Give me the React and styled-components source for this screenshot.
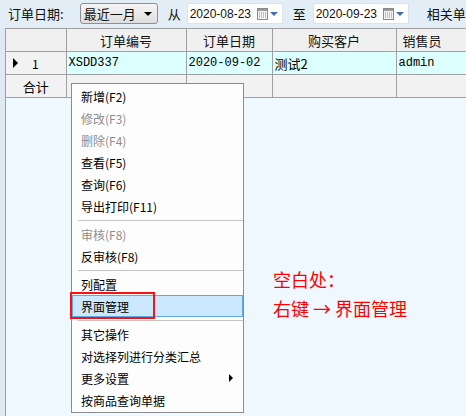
import React from "react";
import styled, { createGlobalStyle } from "styled-components";

const GlobalStyle = createGlobalStyle`
  html, body {
    margin: 0;
    padding: 0;
    background: #e3edf5;
  }
  body {
    font-family: "Noto Sans CJK SC", "Liberation Sans", sans-serif;
  }
`;

const Page = styled.div`
  position: relative;
  width: 466px;
  height: 416px;
  overflow: hidden;
  background: #e3edf5;
  display: flex;
  flex-direction: column;
`;

const Toolbar = styled.div`
  height: 28px;
  flex: none;
  display: flex;
  align-items: center;
  padding: 0 0 1px 8px;
  box-sizing: border-box;
  font-size: 13px;
  color: #111;
  white-space: nowrap;
`;

const Label = styled.span`
  flex: none;
  margin-right: ${({ $gap }) => $gap || 0}px;
`;

const Select = styled.div`
  flex: none;
  width: 78px;
  height: 21px;
  box-sizing: border-box;
  border: 1px solid #8e8f8f;
  border-radius: 3px;
  background: linear-gradient(#f6f6f6, #dedede);
  display: flex;
  align-items: center;
  justify-content: space-between;
  padding: 0 5px 0 3px;
  margin-right: 10px;
  font-size: 13px;
`;

const DownCaret = styled.span`
  width: 0;
  height: 0;
  border-left: 4px solid transparent;
  border-right: 4px solid transparent;
  border-top: 4px solid ${({ $color }) => $color || "#000"};
`;

const DateBox = styled.div`
  flex: none;
  width: 96px;
  height: 21px;
  box-sizing: border-box;
  background: #fff;
  border: 1px solid #d9e3ea;
  display: flex;
  align-items: center;
  padding: 0 4px 0 2px;
  margin-right: 10px;
  font-family: "Liberation Sans", sans-serif;
  font-size: 12px;
`;

const DateText = styled.span`
  flex: 1;
`;

const CalendarButton = styled.span`
  display: flex;
  align-items: center;
  gap: 2px;
`;

const Calendar = () => (
  <svg width="11" height="12" viewBox="0 0 11 12">
    <rect x="0.5" y="0.5" width="10" height="11" fill="#f4f4f4" stroke="#8a8a8a" />
    <rect x="1" y="1" width="9" height="2" fill="#9a9a9a" />
    {[2, 4, 6, 8].map((x) =>
      [4.5, 6.5, 8.5].map((y) => (
        <rect key={`${x}-${y}`} x={x} y={y} width="1" height="1" fill="#8a8a8a" />
      ))
    )}
  </svg>
);

const Body = styled.div`
  flex: 1;
  display: flex;
  min-height: 0;
`;

const SideStrip = styled.div`
  width: 5px;
  flex: none;
  background: #dfe9f1;
`;

const GridPanel = styled.div`
  flex: 1;
  background: #f0f8ff;
  border-left: 1px solid #a0a0a0;
  border-top: 1px solid #a0a0a0;
  overflow: hidden;
`;

const Table = styled.table`
  width: ${({ $w }) => $w}px;
  border-collapse: collapse;
  table-layout: fixed;
  font-size: 12px;
`;

const HeadCell = styled.th`
  height: 22px;
  padding: 0 0 0 ${({ $pad }) => $pad || 0}px;
  background: #f0f0f0;
  border-right: 1px solid #a0a0a0;
  border-bottom: 1px solid #a0a0a0;
  font-weight: normal;
  font-size: 13px;
  text-align: ${({ $align }) => $align || "center"};
  color: #111;
  white-space: nowrap;
`;

const Cell = styled.td`
  height: 22px;
  padding: 0 0 0 ${({ $pad }) => ($pad == null ? 2 : $pad)}px;
  background: ${({ $bg }) => $bg || "#f2f2f2"};
  border-right: 1px solid #a0a0a0;
  border-bottom: 1px solid #a0a0a0;
  white-space: nowrap;
  overflow: hidden;
  color: #000;
  font-family: ${({ $mono }) =>
    $mono ? '"Liberation Mono", "DejaVu Sans Mono", monospace' : '"Noto Sans CJK SC", sans-serif'};
  text-align: ${({ $align }) => $align || "left"};
  font-size: ${({ $size }) => $size || 12}px;
`;

const Indicator = styled.div`
  display: flex;
  align-items: center;
  padding-left: 7px;
  gap: 14px;
`;

const RowArrow = styled.span`
  width: 0;
  height: 0;
  border-top: 5px solid transparent;
  border-bottom: 5px solid transparent;
  border-left: 5px solid #000;
`;

const Menu = styled.div`
  position: absolute;
  left: 71px;
  top: 83px;
  width: 173px;
  height: 330px;
  box-sizing: border-box;
  background: #fdfdfd;
  border: 1px solid #8c8c8c;
  padding: 1px 0;
  display: flex;
  flex-direction: column;
  font-size: 12px;
`;

const MenuItem = styled.div`
  position: relative;
  height: 22px;
  flex: none;
  box-sizing: border-box;
  display: flex;
  align-items: center;
  justify-content: space-between;
  padding: 0 10px 0 ${({ $active }) => ($active ? 8 : 9)}px;
  color: ${({ $disabled }) => ($disabled ? "#8d8d8d" : "#000")};
  background: ${({ $active }) => ($active ? "#cce8ff" : "transparent")};
  border: 1px solid ${({ $active }) => ($active ? "#5fa8ea" : "transparent")};
  border-left-width: ${({ $active }) => ($active ? 1 : 0)}px;
  border-right-width: ${({ $active }) => ($active ? 1 : 0)}px;
`;

const Separator = styled.div`
  height: 6px;
  flex: none;
  margin-left: 6px;
  display: flex;
  align-items: center;
  &::after {
    content: "";
    flex: 1;
    height: 1px;
    background: #c4c4c4;
  }
`;

const SubArrow = styled.span`
  width: 0;
  height: 0;
  border-top: 4px solid transparent;
  border-bottom: 4px solid transparent;
  border-left: 4px solid #000;
`;

const Callout = styled.span`
  position: absolute;
  left: -3px;
  top: -4px;
  width: 85px;
  height: 27px;
  box-sizing: border-box;
  border: 2.5px solid #ff1010;
  pointer-events: none;
`;

const Note = styled.div`
  position: absolute;
  left: 273px;
  top: 265px;
  color: #ff0000;
  font-size: 18px;
  line-height: 29px;
`;

const columns = [
  { key: "ind", title: "", w: 60 },
  { key: "no", title: "订单编号", w: 120 },
  { key: "date", title: "订单日期", w: 86 },
  { key: "cust", title: "购买客户", w: 124 },
  { key: "seller", title: "销售员", w: 70, align: "left", pad: 6 },
  { key: "more", title: "", w: 40 },
];

const tableWidth = columns.reduce((s, c) => s + c.w, 0);

const menu = [
  { label: "新增(F2)" },
  { label: "修改(F3)", disabled: true },
  { label: "删除(F4)", disabled: true },
  { label: "查看(F5)" },
  { label: "查询(F6)" },
  { label: "导出打印(F11)" },
  { sep: true },
  { label: "审核(F8)", disabled: true },
  { label: "反审核(F8)" },
  { sep: true },
  { label: "列配置" },
  { label: "界面管理", active: true },
  { sep: true },
  { label: "其它操作" },
  { label: "对选择列进行分类汇总" },
  { label: "更多设置", sub: true },
  { label: "按商品查询单据" },
];

const DateField = ({ value }) => (
  <DateBox>
    <DateText>{value}</DateText>
    <CalendarButton>
      <Calendar />
      <DownCaret $color="#3f6fa8" />
    </CalendarButton>
  </DateBox>
);

export default function App() {
  const rowBg = "#dcffff";
  return (
    <Page>
      <GlobalStyle />
      <Toolbar>
        <Label $gap={16}>订单日期:</Label>
        <Select>
          <span>最近一月</span>
          <DownCaret />
        </Select>
        <Label $gap={6}>从</Label>
        <DateField value="2020-08-23" />
        <Label $gap={7}>至</Label>
        <DateField value="2020-09-23" />
        <Label style={{ marginLeft: 8 }}>相关单号</Label>
      </Toolbar>
      <Body>
        <SideStrip />
        <GridPanel>
          <Table $w={tableWidth}>
            <colgroup>
              {columns.map((c) => (
                <col key={c.key} style={{ width: c.w }} />
              ))}
            </colgroup>
            <thead>
              <tr>
                {columns.map((c) => (
                  <HeadCell key={c.key} $align={c.align} $pad={c.pad}>
                    {c.title}
                  </HeadCell>
                ))}
              </tr>
            </thead>
            <tbody>
              <tr>
                <Cell $pad={0}>
                  <Indicator>
                    <RowArrow />
                    <span>1</span>
                  </Indicator>
                </Cell>
                <Cell $bg={rowBg} $mono>XSDD337</Cell>
                <Cell $bg={rowBg} $mono>2020-09-02</Cell>
                <Cell $bg={rowBg} $size={13}>测试2</Cell>
                <Cell $bg={rowBg} $mono>admin</Cell>
                <Cell $bg={rowBg} />
              </tr>
              <tr>
                <Cell $align="center" $pad={0} $size={13}>合计</Cell>
                <Cell />
                <Cell />
                <Cell />
                <Cell />
                <Cell />
              </tr>
            </tbody>
          </Table>
        </GridPanel>
      </Body>

      <Menu>
        {menu.map((m, i) =>
          m.sep ? (
            <Separator key={i} />
          ) : (
            <MenuItem key={i} $disabled={m.disabled} $active={m.active}>
              <span>{m.label}</span>
              {m.sub && <SubArrow />}
              {m.active && <Callout />}
            </MenuItem>
          )
        )}
      </Menu>

      <Note>
        <div>空白处：</div>
        <div>右键 → 界面管理</div>
      </Note>
    </Page>
  );
}
